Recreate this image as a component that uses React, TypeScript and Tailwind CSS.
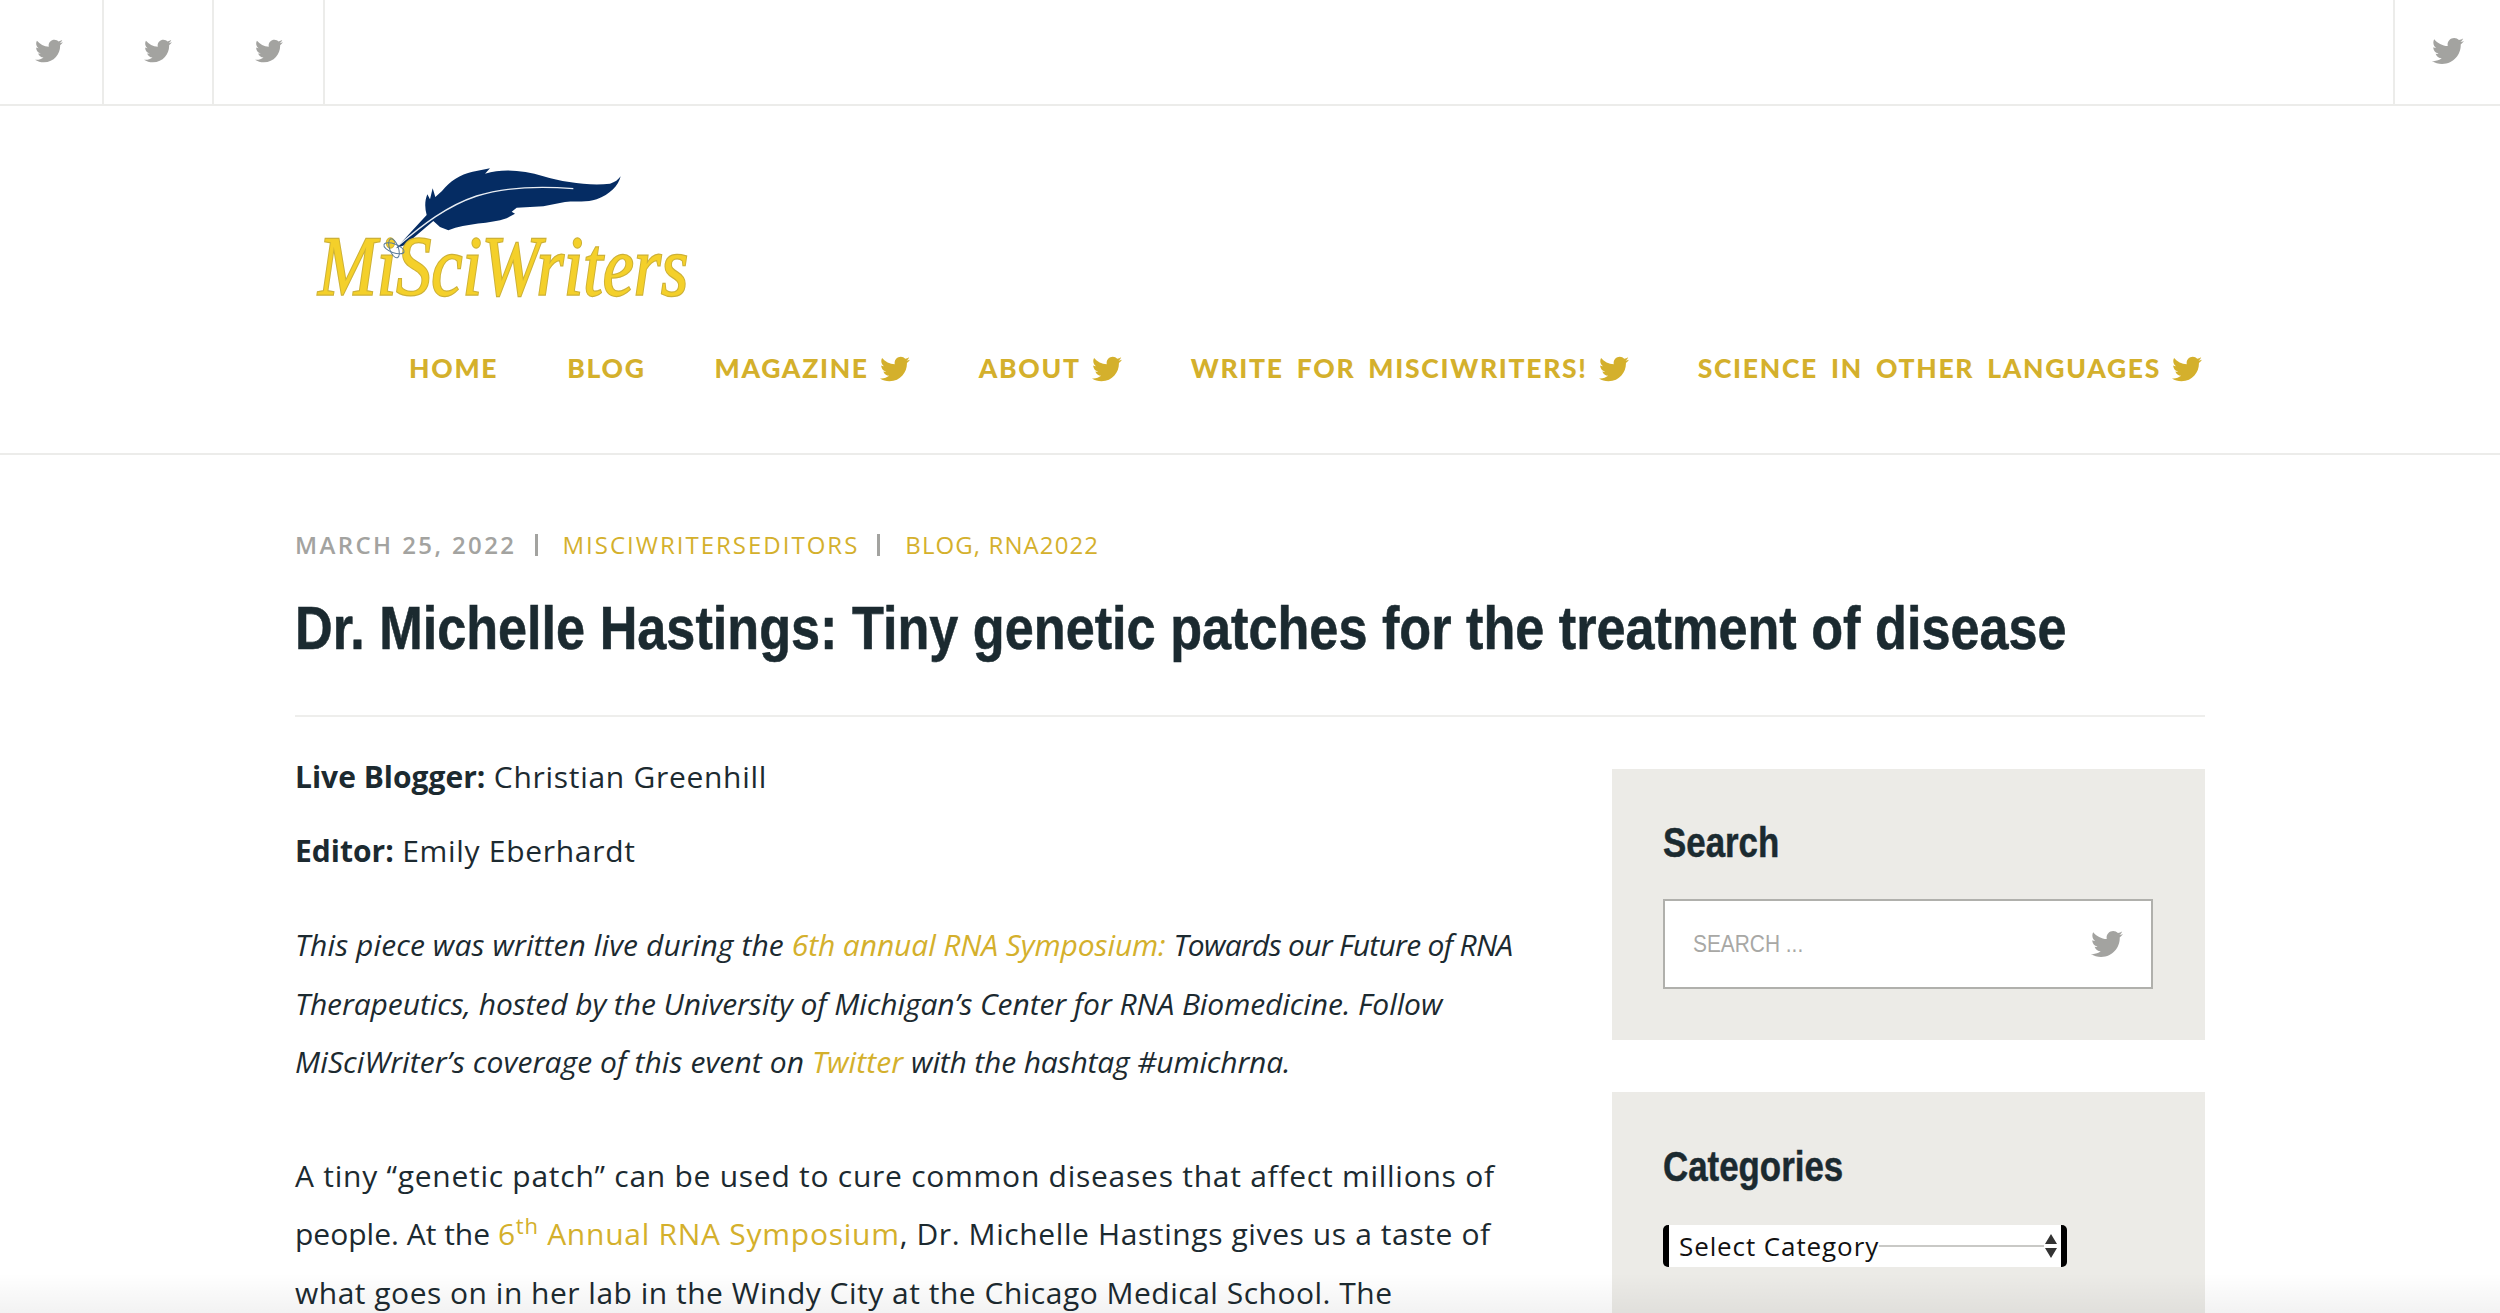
import { FaTwitter } from "react-icons/fa";

function Logo() {
  return (
    <svg width="520" height="180" viewBox="0 0 1560 540" aria-label="MiSciWriters logo">
      <path
        d="M318 322 L410 222 C404 200 404 180 412 160 L420 175 L428 142 L436 168 L456 150 C480 120 510 100 548 92 L600 82 L585 98 C640 82 700 88 760 106 C820 124 900 135 960 128 C975 124 985 116 992 106 C985 135 960 160 920 175 C890 186 860 178 825 183 L760 196 L680 200 L665 212 L675 218 L650 232 C600 250 530 245 475 268 L450 258 L430 240 L345 312 Z"
        fill="#052c63"
      />
      <path d="M322 316 C400 250 470 195 560 165 C640 140 750 135 850 143" fill="none" stroke="#e8edf3" strokeWidth="4" />
      <text
        x="85"
        y="462"
        textLength="1110"
        lengthAdjust="spacingAndGlyphs"
        fill="#f4d02a"
        stroke="#cdb136"
        strokeWidth="7"
        paintOrder="stroke"
        className="[font-family:'Liberation_Serif',serif] text-[255px] italic"
      >
        MiSciWriters
      </text>
      <g fill="none" stroke="#5b7c99" strokeWidth="3">
        <ellipse cx="312" cy="322" rx="32" ry="13" transform="rotate(20 312 322)" />
        <ellipse cx="312" cy="322" rx="13" ry="30" transform="rotate(-20 312 322)" />
      </g>
    </svg>
  );
}

function TopCell({ w }: { w: string }) {
  return (
    <div className={`flex h-full items-center justify-center border-r-2 border-[#ececea] pb-[2px] ${w}`}>
      <FaTwitter className="text-[28px] text-[#a3a3a0]" />
    </div>
  );
}

function NavItem({ label, icon, ml }: { label: string; icon?: boolean; ml: string }) {
  return (
    <span className={`flex items-center whitespace-nowrap ${ml}`}>
      {label}
      {icon && <FaTwitter className="ml-[11px] text-[30px]" />}
    </span>
  );
}

function Gold({ children }: { children: React.ReactNode }) {
  return <span className="text-[#d4b02c]">{children}</span>;
}

const narrowFont = "[font-family:'Liberation_Sans',sans-serif]";

export default function App() {
  return (
    <div className="relative h-[1313px] overflow-hidden bg-white text-[#1c2a30] [font-family:'Open_Sans','Noto_Sans',sans-serif]">
      <div className="flex h-[106px] items-stretch border-b-2 border-[#ececea]">
        <TopCell w="w-[104px] pr-[5px]" />
        <TopCell w="w-[110px]" />
        <TopCell w="w-[111px]" />
        <div className="flex-1" />
        <div className="flex w-[107px] items-center justify-center border-l-2 border-[#ececea] pb-[2px]">
          <FaTwitter className="text-[32px] text-[#a3a3a0]" />
        </div>
      </div>

      <header className="h-[349px] border-b-2 border-[#ececea]">
        <div className="mx-auto w-[1910px]">
          <div className="ml-[-5px] pt-[35px] leading-none">
            <Logo />
          </div>
          <nav className="mt-[20px] mr-[3px] flex h-[56px] items-center justify-end text-[26.5px] font-black tracking-[1.7px] text-[#d4b02c] [word-spacing:5px] [font-family:Lato,sans-serif]">
            <NavItem label="HOME" ml="" />
            <NavItem label="BLOG" ml="ml-[69px]" />
            <NavItem label="MAGAZINE" icon ml="ml-[69px]" />
            <NavItem label="ABOUT" icon ml="ml-[69px]" />
            <NavItem label="WRITE FOR MISCIWRITERS!" icon ml="ml-[69px]" />
            <NavItem label="SCIENCE IN OTHER LANGUAGES" icon ml="ml-[69px]" />
          </nav>
        </div>
      </header>

      <main className="mx-auto w-[1910px]">
        <div className="mt-[72px] flex h-[36px] items-center text-[24px]">
          <span className="font-semibold tracking-[2.4px] text-[#a3a3a0]">MARCH 25, 2022</span>
          <span className="mr-[25px] ml-[18px] h-[22px] w-[3px] bg-[#a3a3a0]" />
          <span className="tracking-[2px]">
            <Gold>MISCIWRITERSEDITORS</Gold>
          </span>
          <span className="mr-[25px] ml-[18px] h-[22px] w-[3px] bg-[#a3a3a0]" />
          <span className="tracking-[1.1px]">
            <Gold>BLOG, RNA2022</Gold>
          </span>
        </div>

        <h1
          className={`mt-[29px] origin-left scale-x-[0.842] text-[62px] leading-[72px] font-bold whitespace-nowrap text-[#1b2a30] [-webkit-text-stroke:0.6px_#1b2a30] ${narrowFont}`}
        >
          Dr. Michelle Hastings: Tiny genetic patches for the treatment of disease
        </h1>

        <div className="mt-[51px] border-t-2 border-[#eeeeec]" />

        <div className="mt-[35px] flex justify-between">
          <article className="w-[1240px] text-[30px]">
            <p className="leading-[50px] tracking-[0.7px]">
              <strong className="tracking-normal">Live Blogger:</strong> Christian Greenhill
            </p>
            <p className="mt-[24px] leading-[50px] tracking-[0.7px]">
              <strong className="tracking-normal">Editor:</strong> Emily Eberhardt
            </p>
            <p className="mt-[40px] leading-[58.5px] tracking-[0.1px] italic">
              This piece was written live during the{" "}
              <span className="tracking-[-0.1px]">
                <Gold>6th annual RNA Symposium:</Gold>
              </span>{" "}
              <span className="tracking-[-0.7px]">Towards our Future of RNA</span>
              <br />
              <span className="tracking-[-0.08px]">
                Therapeutics, hosted by the University of Michigan’s Center for RNA Biomedicine. Follow
              </span>
              <br />
              MiSciWriter’s coverage of this event on <Gold>Twitter</Gold>{" "}
              <span className="tracking-[-0.15px]">with the hashtag #umichrna.</span>
            </p>
            <p className="mt-[55px] leading-[58.5px] tracking-[0.74px]">
              A tiny “genetic patch” can be used to cure common diseases that affect millions of
              <br />
              <span className="tracking-[0px]">people. At the </span>
              <Gold>
                6<sup className="text-[22px]">th</sup> Annual RNA Symposium
              </Gold>
              <span className="tracking-[0.6px]">, Dr. Michelle Hastings gives us a taste of</span>
              <br />
              <span className="tracking-[0.5px]">what goes on in her lab in the Windy City at the Chicago Medical School. The</span>
            </p>
          </article>

          <aside className="mt-[17px] w-[593px]">
            <section className="h-[271px] bg-[#ecebe7] px-[51px] pt-[45px]">
              <h2
                className={`origin-left scale-x-[0.83] text-[42px] leading-[58px] font-bold text-[#1b2a30] [-webkit-text-stroke:0.5px_#1b2a30] ${narrowFont}`}
              >
                Search
              </h2>
              <div className="mt-[27px] flex h-[90px] w-[490px] items-center justify-between border-2 border-[#b0b0ac] bg-white pr-[28px] pl-[28px]">
                <span className={`origin-left scale-x-[0.87] text-[24px] text-[#a8a8a5] ${narrowFont}`}>SEARCH ...</span>
                <FaTwitter className="text-[32px] text-[#a3a3a0]" />
              </div>
            </section>
            <section className="mt-[52px] h-[300px] bg-[#ecebe7] px-[51px] pt-[46px]">
              <h2
                className={`origin-left scale-x-[0.83] text-[42px] leading-[58px] font-bold text-[#1b2a30] [-webkit-text-stroke:0.5px_#1b2a30] ${narrowFont}`}
              >
                Categories
              </h2>
              <div className="mt-[29px] flex h-[42px] w-[404px] items-center rounded-[5px] border-x-[6px] border-black bg-white pr-[3px] pl-[10px]">
                <span className="text-[26px] leading-none tracking-[0.9px] whitespace-nowrap text-[#111]">Select Category</span>
                <span className="h-[2px] flex-1 bg-[#c9c9c6]" />
                <svg width="14" height="28" viewBox="0 0 14 28" fill="#333" aria-hidden="true">
                  <path d="M7 2 L13 12 H1 Z M7 26 L1 16 H13 Z" />
                </svg>
              </div>
            </section>
          </aside>
        </div>
      </main>

      <div className="pointer-events-none absolute inset-x-0 bottom-0 h-[40px] bg-gradient-to-b from-transparent to-black/5" />
    </div>
  );
}
